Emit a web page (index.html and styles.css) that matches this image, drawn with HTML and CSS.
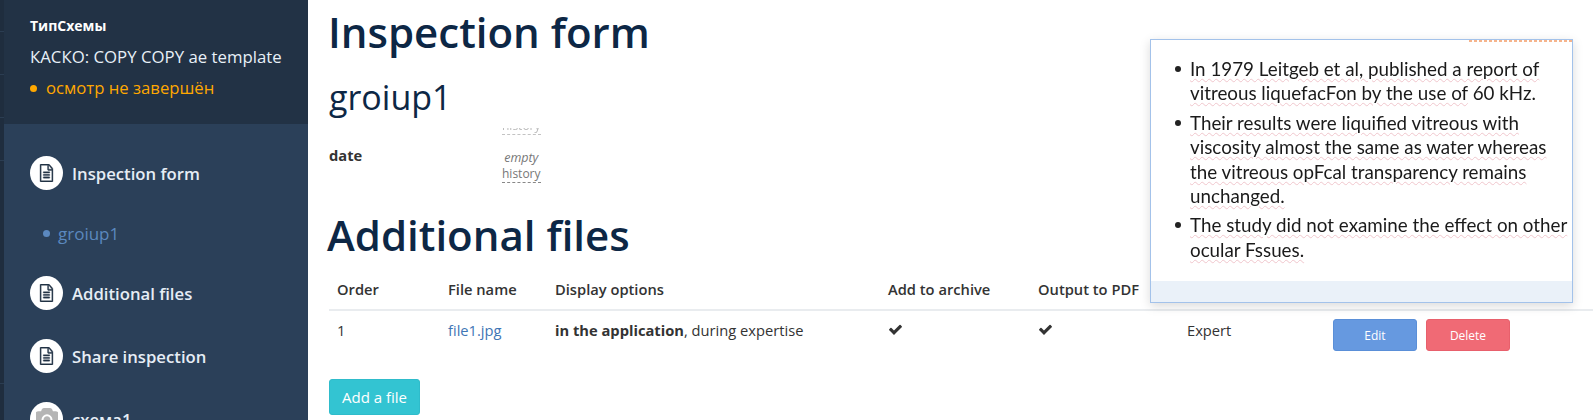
FILE: index.html
```html
<!DOCTYPE html>
<html lang="en">
<head>
    <meta charset="UTF-8">
    <title>Inspection form</title>
    <link rel="stylesheet" href="styles.css">
</head>
<body>
    <svg class="defs" width="0" height="0">
        <symbol id="i-file" viewBox="0 0 1792 1792" preserveAspectRatio="none"><path d="M1596 380q28 28 48 76t20 88v1152q0 40-28 68t-68 28h-1344q-40 0-68-28t-28-68v-1600q0-40 28-68t68-28h896q40 0 88 20t76 48zm-444-244v376h376q-10-29-22-41l-313-313q-12-12-41-22zm384 1528v-1024h-416q-40 0-68-28t-28-68v-416h-768v1536h1280zm-1024-864q0-14 9-23t23-9h704q14 0 23 9t9 23v64q0 14-9 23t-23 9h-704q-14 0-23-9t-9-23v-64zm736 224q14 0 23 9t9 23v64q0 14-9 23t-23 9h-704q-14 0-23-9t-9-23v-64q0-14 9-23t23-9h704zm0 256q14 0 23 9t9 23v64q0 14-9 23t-23 9h-704q-14 0-23-9t-9-23v-64q0-14 9-23t23-9h704z"/></symbol>
        <symbol id="i-camera" viewBox="0 0 1792 1792"><path d="M896 672q119 0 203.5 84.5t84.5 203.5-84.5 203.5-203.5 84.5-203.5-84.5-84.5-203.5 84.5-203.5 203.5-84.5zm704-416q106 0 181 75t75 181v896q0 106-75 181t-181 75h-1408q-106 0-181-75t-75-181v-896q0-106 75-181t181-75h224l51-136q19-49 69.5-84.5t103.5-35.5h512q53 0 103.5 35.5t69.5 84.5l51 136h224zm-704 1152q185 0 316.5-131.5t131.5-316.5-131.5-316.5-316.5-131.5-316.5 131.5-131.5 316.5 131.5 316.5 316.5 131.5z"/></symbol>
        <symbol id="i-check" viewBox="0 0 1792 1792"><path d="M1671 566q0 40-28 68l-724 724-136 136q-28 28-68 28t-68-28l-136-136-362-362q-28-28-28-68t28-68l136-136q28-28 68-28t68 28l294 295 656-657q28-28 68-28t68 28l136 136q28 28 28 68z"/></symbol>
    </svg>

    <div class="rail">
        <div class="rail-row first"></div>
        <div class="rail-row"></div>
        <div class="rail-row"></div>
        <div class="rail-row"></div>
        <div class="rail-row last"></div>
    </div>
    <aside class="sidebar">
        <div class="side-head">
            <div class="side-type">ТипСхемы</div>
            <div class="side-name">КАСКО: COPY COPY ae template</div>
            <div class="side-status"><span class="dot"></span>осмотр не завершён</div>
        </div>
        <nav class="side-nav">
            <a class="nav-item"><span class="nav-icon"><svg><use href="#i-file"/></svg></span>Inspection form</a>
            <a class="nav-sub"><span class="dot"></span>groiup1</a>
            <a class="nav-item"><span class="nav-icon"><svg><use href="#i-file"/></svg></span>Additional files</a>
            <a class="nav-item"><span class="nav-icon"><svg><use href="#i-file"/></svg></span>Share inspection</a>
            <a class="nav-item"><span class="nav-icon muted"><svg><use href="#i-camera"/></svg></span>схема1</a>
        </nav>
    </aside>

    <main class="content">
        <h1>Inspection form</h1>
        <h2>groiup1</h2>
        <div class="field-clip"><span class="history">history</span></div>
        <div class="field">
            <div class="field-label">date</div>
            <div class="field-value">
                <em>empty</em>
                <span class="history">history</span>
            </div>
        </div>
        <h1 class="second">Additional files</h1>
        <table class="files">
            <thead>
                <tr>
                    <th class="c-order">Order</th>
                    <th class="c-name">File name</th>
                    <th class="c-display">Display options</th>
                    <th class="c-archive">Add to archive</th>
                    <th class="c-pdf">Output to PDF</th>
                    <th class="c-role"></th>
                    <th></th>
                </tr>
            </thead>
            <tbody>
                <tr>
                    <td>1</td>
                    <td><a class="link">file1.jpg</a></td>
                    <td><b>in the application</b>, during expertise</td>
                    <td><svg class="check"><use href="#i-check"/></svg></td>
                    <td><svg class="check"><use href="#i-check"/></svg></td>
                    <td>Expert</td>
                    <td class="actions">
                        <div class="action-row">
                            <button class="btn btn-edit">Edit</button>
                            <button class="btn btn-delete">Delete</button>
                        </div>
                    </td>
                </tr>
            </tbody>
        </table>
        <button class="btn-add">Add a file</button>
    </main>

    <div class="popup">
        <div class="popup-mark"></div>
        <ul>
            <li><u>In 1979 Leitgeb et al, published a report of vitreous liquefacFon by the use of</u> 60 kHz.</li>
            <li><u>Their results were liquified vitreous with viscosity almost the same as water whereas the vitreous opFcal transparency remains unchanged.</u></li>
            <li><u>The study did not examine the effect on other ocular Fssues.</u></li>
        </ul>
        <div class="popup-foot"></div>
    </div>
</body>
</html>
```

FILE: styles.css
```css
* { box-sizing: border-box; }
html, body {
    margin: 0;
    height: 420px;
    overflow: hidden;
}
body {
    display: flex;
    font-family: 'Open Sans', sans-serif;
    font-size: 14.7px;
    color: #333;
    background: #fff;
    position: relative;
}
.defs {
    position: absolute;
}
.rail {
    width: 4px;
    flex: none;
    background: #1f2d3e;
}
.rail-row {
    height: 43px;
    border-bottom: 1px solid #2b3d52;
}
.rail-row.first {
    height: 32px;
}
.rail-row.last {
    height: 223px;
}
.sidebar {
    width: 304px;
    flex: none;
    background: #2b4059;
    color: #fff;
    overflow: hidden;
}
.side-head {
    height: 124px;
    background: #223245;
    padding: 15px 0 0 26px;
}
.side-type {
    font-weight: 700;
    font-size: 14px;
    line-height: 22px;
}
.side-name {
    font-size: 16.8px;
    line-height: 22px;
    margin-top: 9px;
    color: #e8f0f8;
    white-space: nowrap;
}
.side-status {
    font-size: 16.7px;
    line-height: 22px;
    margin-top: 9px;
    color: #ffa800;
    display: flex;
    align-items: center;
}
.dot {
    width: 7px;
    height: 7px;
    border-radius: 50%;
    background: currentColor;
    margin-right: 9px;
}
.side-nav {
    display: flex;
    flex-direction: column;
    padding: 32px 0 0 26px;
}
.nav-item {
    display: flex;
    align-items: center;
    flex: none;
    height: 34px;
    margin-bottom: 29px;
    font-size: 16.7px;
    font-weight: 600;
    color: #e6edf5;
}
.nav-icon {
    width: 33px;
    height: 34px;
    border-radius: 50%;
    background: #fff;
    margin-right: 9px;
    display: flex;
    align-items: center;
    justify-content: center;
    flex: none;
}
.nav-icon svg {
    width: 15px;
    height: 18px;
    fill: #223245;
    stroke: #223245;
    stroke-width: 40;
}
.nav-icon.muted svg {
    fill: #b5b5b5;
    stroke: none;
    width: 22px;
    height: 22px;
}
.nav-sub {
    display: flex;
    align-items: center;
    flex: none;
    height: 24px;
    margin: 2px 0 31px 13px;
    font-size: 17px;
    color: #5b88bf;
}
.nav-sub .dot {
    margin-right: 8px;
}
.content {
    flex: 1;
    min-width: 0;
    padding-left: 20px;
}
h1 {
    margin: 8px 0 0;
    font-size: 42px;
    line-height: 48px;
    font-weight: 600;
    color: #0d2745;
}
h1.second {
    margin: 28px 0 0 -1px;
}
h2 {
    margin: 18px 0 0 1px;
    font-size: 34px;
    line-height: 46px;
    font-weight: 400;
    color: #0d2745;
}
.field-clip {
    height: 7px;
    margin: 8px 0 0 174px;
    overflow: hidden;
    display: flex;
    align-items: flex-end;
    opacity: 0.5;
}
.field {
    display: flex;
    margin: 6px 0 0 1px;
}
.field-label {
    width: 173px;
    font-weight: 700;
    line-height: 20px;
    margin-top: 4px;
}
.field-value {
    display: flex;
    flex-direction: column;
    align-items: center;
    font-size: 12.5px;
    color: #777;
    line-height: 16px;
    padding-top: 9px;
}
.history {
    border-bottom: 1px dashed #888;
    line-height: 16px;
    font-size: 12px;
    color: #777;
}
.files {
    border-collapse: collapse;
    table-layout: fixed;
    width: 1264px;
    margin: 7px 0 0 1px;
}
.files th {
    text-align: left;
    font-weight: 600;
    height: 44px;
    padding: 2px 8px 0;
    border-bottom: 2px solid #e9ecef;
}
.files td {
    height: 38px;
    padding: 0 8px;
    vertical-align: middle;
}
.c-order { width: 111px; }
.c-name { width: 107px; }
.c-display { width: 333px; }
.c-archive { width: 150px; }
.c-pdf { width: 149px; }
.c-role { width: 146px; }
.link {
    color: #3f76b5;
}
.check {
    width: 15px;
    height: 15px;
    fill: #333;
    display: block;
}
.files td.actions {
    vertical-align: top;
}
.action-row {
    display: flex;
    gap: 9px;
}
.btn {
    width: 84px;
    height: 32px;
    border-radius: 3px;
    font: 12px 'Open Sans', sans-serif;
    color: #fff;
    padding: 0;
    margin-top: 8px;
    margin-bottom: -10px;
}
.btn-edit {
    background: #6699e0;
    border: 1px solid #5a8fd8;
}
.btn-delete {
    background: #f06a75;
    border: 1px solid #e8606c;
}
.btn-add {
    display: block;
    margin: 31px 0 0 1px;
    width: 91px;
    height: 36px;
    border: 1px solid #2fbccb;
    border-radius: 3px;
    background: #33c4d2;
    color: #fff;
    font: 15px 'Open Sans', sans-serif;
    padding: 0;
}
/* preview that hovers over the table */
.popup {
    position: absolute;
    left: 1150px;
    top: 39px;
    width: 423px;
    height: 264px;
    background: #fff;
    border: 1px solid #a3c2ea;
    box-shadow: 0 3px 10px rgba(0, 0, 0, 0.15);
    font-family: 'Lato', sans-serif;
    font-size: 18.8px;
    line-height: 24.4px;
    color: #1a1a1a;
    display: flex;
    flex-direction: column;
}
.popup-mark {
    position: absolute;
    top: 0;
    right: 0;
    width: 103px;
    height: 2px;
    background: repeating-linear-gradient(90deg, #f6b48c 0 3px, #fff 3px 5px);
}
.popup ul {
    flex: 1;
    margin: 0;
    padding: 17px 0 0 39px;
    list-style: none;
    filter: blur(0.4px);
}
.popup li {
    position: relative;
    margin-bottom: 5px;
}
.popup li::before {
    content: '';
    position: absolute;
    left: -15px;
    top: 9px;
    width: 6px;
    height: 6px;
    border-radius: 50%;
    background: #222;
}
.popup u {
    text-decoration: underline wavy #f0c6cc 1px;
    text-underline-offset: 2px;
}
.popup-foot {
    height: 21px;
    background: #eaf1f9;
}
```
